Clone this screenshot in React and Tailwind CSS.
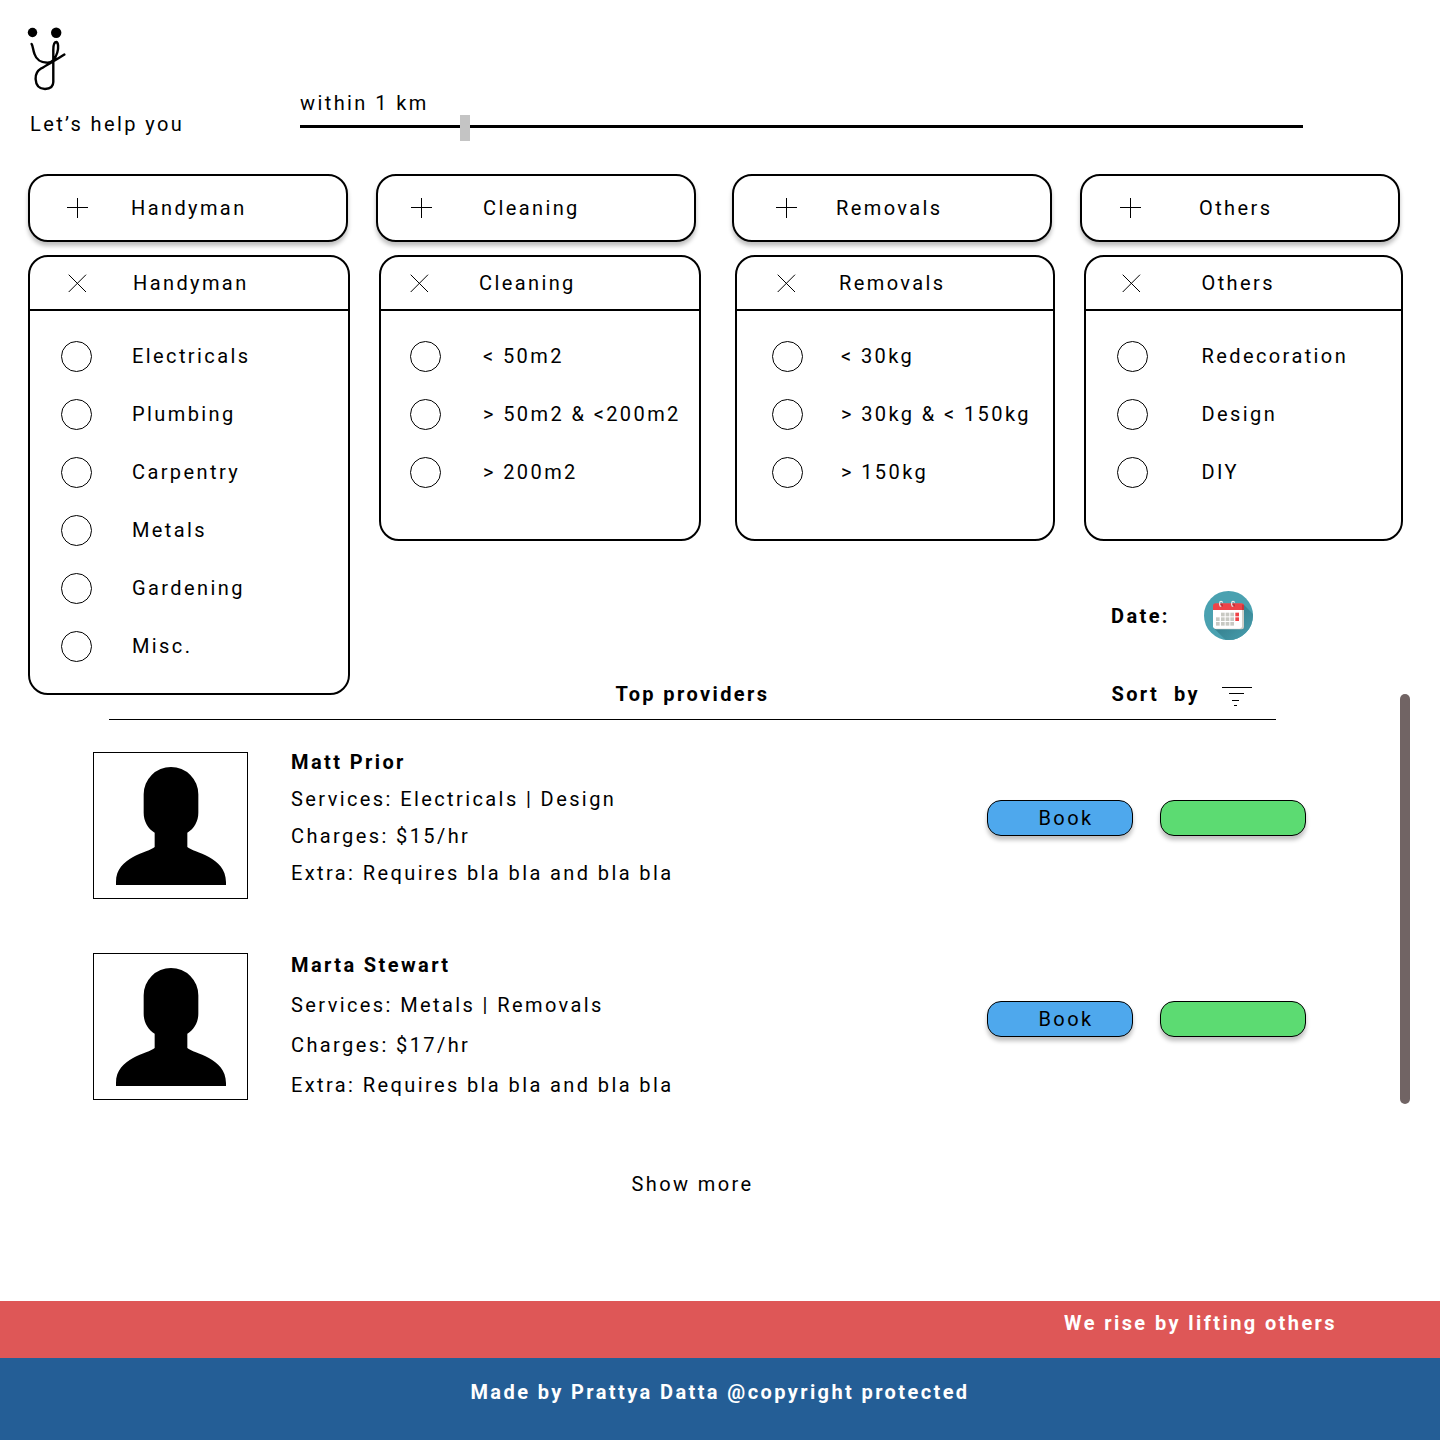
import { useState } from "react";

const categories = [
  {
    name: "Handyman",
    card: "pl-9 gap-[43px]",
    head: "pl-9 gap-[45px]",
    list: "pl-[31px] gap-[40px]",
    options: ["Electricals", "Plumbing", "Carpentry", "Metals", "Gardening", "Misc."],
  },
  {
    name: "Cleaning",
    card: "pl-8 gap-[51px]",
    head: "pl-[27px] gap-[49px]",
    list: "pl-[29px] gap-[42px]",
    options: ["< 50m2", "> 50m2 & <200m2", "> 200m2"],
  },
  {
    name: "Removals",
    card: "pl-[41px] gap-[39px]",
    head: "pl-[38px] gap-[42px]",
    list: "pl-[35px] gap-[38px]",
    options: ["< 30kg", "> 30kg & < 150kg", "> 150kg"],
  },
  {
    name: "Others",
    card: "pl-[37px] gap-[58px]",
    head: "pl-[34px] gap-[60px]",
    list: "pl-[31px] gap-[54px]",
    options: ["Redecoration", "Design", "DIY"],
  },
];

const providers = [
  {
    name: "Matt Prior",
    services: "Electricals | Design",
    rate: "$15/hr",
    extra: "Requires bla bla and bla bla",
    leading: "leading-[37px]",
  },
  {
    name: "Marta Stewart",
    services: "Metals | Removals",
    rate: "$17/hr",
    extra: "Requires bla bla and bla bla",
    leading: "leading-10",
  },
];

function Logo() {
  return (
    <svg width="41" height="66" viewBox="28 26 41 66" fill="none" aria-label="y logo" role="img" className="overflow-visible">
      <circle cx="32.5" cy="32.5" r="4.7" fill="#000" />
      <circle cx="56.2" cy="32.8" r="5.2" fill="#000" />
      <path
        d="M31.6 44 C32.8 45.5 33 50 34.5 54 C36 59 41 62.6 47.5 62.8 C52.5 62.8 55.5 58.5 57.3 52.5 C58.8 47.5 58.2 42.5 56.4 42 C54.2 42 53.3 45.5 53.3 50 V82 C53.3 86.5 50.5 88.8 45 89 C39.5 89 36 85.5 35.6 79 C35.3 73.5 37.2 71 41 68.6 C47.5 64.5 57 59.5 64.4 54.6"
        stroke="#000"
        strokeWidth="2.4"
        strokeLinecap="round"
        strokeLinejoin="round"
      />
    </svg>
  );
}

function Plus() {
  return (
    <svg width="22" height="22" viewBox="0 0 22 22" stroke="#000" strokeWidth="1" aria-hidden="true">
      <path d="M1 10.5 H22 M11.5 1 V21" />
    </svg>
  );
}

function Cross() {
  return (
    <svg width="22" height="22" viewBox="0 0 22 22" stroke="#000" strokeWidth="1" aria-hidden="true">
      <path d="M2.7 2.7 L20 20 M20 2.7 L2.7 20" />
    </svg>
  );
}

function CalendarIcon() {
  const cells = [
    [51, 65], [65, 65], [79, 65],
    [36, 79], [51, 79], [65, 79], [79, 79],
    [36, 93], [51, 93], [65, 93], [79, 93],
  ];
  return (
    <svg width="49" height="49" viewBox="0 0 147 147" aria-hidden="true">
      <defs>
        <clipPath id="disc">
          <circle cx="73.5" cy="73.5" r="73.5" />
        </clipPath>
        <linearGradient id="shade" x1="0.3" y1="0.3" x2="0.85" y2="0.85">
          <stop offset="0" stopColor="#35808e" />
          <stop offset="1" stopColor="#489eae" />
        </linearGradient>
      </defs>
      <circle cx="73.5" cy="73.5" r="73.5" fill="#4aa1b0" />
      <path d="M118 40 L160 82 V160 H78 L30 112 Z" fill="url(#shade)" clipPath="url(#disc)" />
      <rect x="30" y="38" width="90" height="77" rx="7" fill="#cfcfc8" />
      <path d="M27 55 H114 V106 Q114 113 107 113 H34 Q27 113 27 106 Z" fill="#fff" />
      <path d="M27 57 V45 Q27 37 35 37 H112 Q120 37 120 45 V57 Z" fill="#ef4348" />
      <path d="M114 57 V42 L118 40 Q120 42 120 45 V57 Z" fill="#c9363c" />
      {[51, 87].map((x) => (
        <g key={x} fill="none">
          <circle cx={x + 1} cy="43" r="5" fill="#b93037" />
          <path
            d={x === 51 ? "M56 35 Q55 31 51 31 Q47 31 47 36 V41 Q47 46 52 46" : "M92 35 Q91 31 87 31 Q83 31 83 36 V41 Q83 46 88 46"}
            stroke="#f3eeee"
            strokeWidth="3.5"
          />
        </g>
      ))}
      {cells.map(([x, y]) => (
        <rect key={`${x}-${y}`} x={x} y={y} width="11" height="11" fill="#c8c9c3" />
      ))}
      <rect x="94" y="65" width="11" height="11" fill="#ef4348" />
      <rect x="94" y="79" width="11" height="11" fill="#ef4348" />
    </svg>
  );
}

function SortIcon() {
  return (
    <svg width="30" height="24" viewBox="0 0 30 24" stroke="#000" strokeWidth="1" aria-hidden="true">
      <path d="M0 5.5 H30 M7 11.5 H22 M10 18.5 H17 M12 23.5 H15" />
    </svg>
  );
}

function Avatar() {
  return (
    <div className="mt-2 h-[147px] w-[155px] shrink-0 border border-black pl-[22px] pt-[14px]">
      <svg width="110" height="118" viewBox="0 0 330 354" aria-hidden="true">
        <path d="M83 82 A82 82 0 0 1 247 82 V137 C247 163 234 185 214 197 V240 C232 257 330 268 330 345 V354 H0 V345 C0 268 98 257 116 240 V197 C96 185 83 163 83 137 Z" />
      </svg>
    </div>
  );
}

function CategoryCard({ category }) {
  return (
    <button
      type="button"
      className={`flex h-[68px] items-center rounded-[20px] border-2 border-black bg-white text-left shadow-[0_4px_4px_rgba(0,0,0,0.25)] ${category.card}`}
    >
      <Plus />
      {category.name}
    </button>
  );
}

function CategoryPanel({ category }) {
  return (
    <fieldset className="rounded-[20px] border-2 border-black bg-white">
      <div className={`flex h-[54px] items-center border-b-2 border-black ${category.head}`}>
        <button type="button" aria-label={`Close ${category.name}`}>
          <Cross />
        </button>
        <h2>{category.name}</h2>
      </div>
      <div className="flex min-h-[228px] flex-col pb-[18px] pt-4">
        {category.options.map((option) => (
          <label key={option} className={`flex h-[58px] items-center whitespace-nowrap ${category.list}`}>
            <input
              type="radio"
              name={category.name}
              className="size-[31px] shrink-0 appearance-none rounded-full border border-black checked:bg-black"
            />
            {option}
          </label>
        ))}
      </div>
    </fieldset>
  );
}

function Provider({ provider }) {
  return (
    <li className="flex items-start">
      <Avatar />
      <div className={`ml-[43px] flex-1 ${provider.leading}`}>
        <h3 className="font-bold">{provider.name}</h3>
        <p>Services: {provider.services}</p>
        <p>Charges: {provider.rate}</p>
        <p>Extra: {provider.extra}</p>
      </div>
      <div className="mt-14 flex gap-[27px]">
        <button
          type="button"
          className="h-9 w-[146px] rounded-[14px] border border-black bg-[#4ea8ed] pl-3 shadow-[0_4px_4px_rgba(0,0,0,0.25)]"
        >
          Book
        </button>
        <button
          type="button"
          aria-label={`Contact ${provider.name}`}
          className="h-9 w-[146px] rounded-[14px] border border-black bg-[#5cdb72] shadow-[0_4px_4px_rgba(0,0,0,0.25)]"
        />
      </div>
    </li>
  );
}

export default function App() {
  const [metres, setMetres] = useState(1000);

  return (
    <div className="flex min-h-screen flex-col bg-white font-['Roboto',sans-serif] text-[20px] leading-6 tracking-[0.12em] text-black">
      <header className="flex pl-7 pr-[137px] pt-[26px]">
        <div className="w-[272px] shrink-0">
          <Logo />
          <p className="mt-5 pl-0.5">Let’s help you</p>
        </div>
        <div className="flex flex-1 flex-col pt-[65px]">
          <label htmlFor="distance">within {metres / 1000} km</label>
          <input
            id="distance"
            type="range"
            min="0"
            max="6200"
            step="100"
            value={metres}
            onChange={(e) => setMetres(Number(e.target.value))}
            className="h-[23px] w-full appearance-none bg-transparent [&::-webkit-slider-runnable-track]:h-[3px] [&::-webkit-slider-runnable-track]:bg-black [&::-webkit-slider-thumb]:-mt-[10px] [&::-webkit-slider-thumb]:h-[26px] [&::-webkit-slider-thumb]:w-[10px] [&::-webkit-slider-thumb]:appearance-none [&::-webkit-slider-thumb]:bg-[#c4c4c4]"
          />
        </div>
      </header>

      <section className="mt-9 grid grid-cols-2 gap-9 pl-7 pr-10">
        {[categories.slice(0, 2), categories.slice(2)].map((pair) => (
          <div key={pair[0].name} className="grid grid-cols-2 gap-7">
            {pair.map((c) => (
              <CategoryCard key={c.name} category={c} />
            ))}
          </div>
        ))}
      </section>

      <section className="mt-[13px] grid grid-cols-[673fr_668fr] items-start gap-[34px] pl-7 pr-[37px]">
        {[categories.slice(0, 2), categories.slice(2)].map((pair) => (
          <div key={pair[0].name} className="grid grid-cols-2 items-start gap-[29px]">
            {pair.map((c) => (
              <CategoryPanel key={c.name} category={c} />
            ))}
          </div>
        ))}
      </section>

      <section className="-mt-[104px] flex flex-1 flex-col pl-[93px] pr-[30px]">
        <div className="flex items-center justify-end pr-[157px] font-bold">
          <label htmlFor="date" className="w-[93px]">Date:</label>
          <button id="date" type="button">
            <CalendarIcon />
          </button>
        </div>

        <div className="flex items-start">
          <div className="mt-[42px] flex-1">
            <div className="ml-4 mr-[30px] grid grid-cols-[1fr_auto_1fr] items-center border-b border-black pb-[13px] font-bold">
              <h2 className="col-start-2">Top providers</h2>
              <button type="button" className="mr-6 flex items-center gap-[22px] justify-self-end whitespace-pre">
                {"Sort  by"}
                <SortIcon />
              </button>
            </div>
            <ul className="mt-6 space-y-[46px]">
              {providers.map((p) => (
                <Provider key={p.name} provider={p} />
              ))}
            </ul>
          </div>
          <div className="ml-[94px] mt-[54px] h-[410px] w-[10px] rounded-full bg-[#716464]" />
        </div>

        <div className="ml-4 mr-[134px] mt-[67px] text-center">
          <button type="button">Show more</button>
        </div>
      </section>

      <footer className="mt-auto font-bold text-white">
        <p className="h-[57px] bg-[#de5757] pr-[103px] pt-[10px] text-right">We rise by lifting others</p>
        <p className="h-[82px] bg-[#245e96] pt-[22px] text-center">Made by Prattya Datta @copyright protected</p>
      </footer>
    </div>
  );
}
